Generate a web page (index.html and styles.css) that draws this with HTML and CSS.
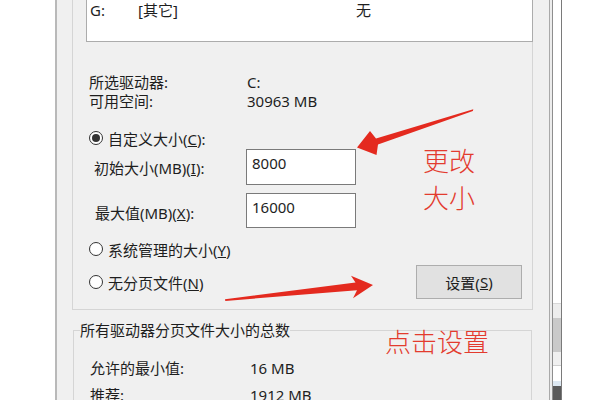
FILE: index.html
```html
<!DOCTYPE html>
<html>
<head>
<meta charset="utf-8">
<link rel="stylesheet" href="styles.css">
</head>
<body>
<div class="screen">
  <div class="blank"></div>
  <div class="dialog">
    <div class="group1">
      <div class="listbox">
        <span>G:</span><span>[其它]</span><span>无</span>
      </div>
      <div class="info">
        <div class="kv"><span class="k">所选驱动器:</span><span>C:</span></div>
        <div class="kv"><span class="k">可用空间:</span><span>30963 MB</span></div>
      </div>
      <div class="radio-row r1"><span class="radio on"></span><span>自定义大小(<u>C</u>):</span></div>
      <div class="field f-a"><span class="k">初始大小(MB)(<u>I</u>):</span><div class="input">8000</div></div>
      <div class="field f-b"><span class="k">最大值(MB)(<u>X</u>):</span><div class="input">16000</div></div>
      <div class="radio-row r2"><span class="radio"></span><span>系统管理的大小(<u>Y</u>)</span></div>
      <div class="bottom-row">
        <div class="radio-label"><span class="radio"></span><span>无分页文件(<u>N</u>)</span></div>
        <div class="button">设置(<u>S</u>)</div>
      </div>
    </div>
    <fieldset class="group2">
      <legend>所有驱动器分页文件大小的总数</legend>
      <div class="sum s-a"><span class="k">允许的最小值:</span><span>16 MB</span></div>
      <div class="sum s-b"><span class="k">推荐:</span><span>1912 MB</span></div>
    </fieldset>
  </div>
  <div class="frame">
    <div class="fr1"></div>
    <div class="fr2"></div>
    <div class="fr3">
      <div class="sb0"></div>
      <div class="sb1"></div>
      <div class="sb2"></div>
      <div class="sb3"></div>
      <div class="sb4"></div>
      <div class="sb5"></div>
      <div class="sb6"></div>
      <div class="sb7"></div>
      <div class="sb8"></div>
    </div>
    <div class="fr4"></div>
  </div>
  <div class="rest"></div>

  <svg class="arrows" width="600" height="400" viewBox="0 0 600 400">
    <polygon fill="#e42a1f" points="473.3,109.2 376,138.6 370,131 357,147.5 376.5,155 378,144.6 472.9,111.0"/>
    <polygon fill="#e42a1f" points="225,299.2 355.5,282.6 351,275.8 373,285 353,298.2 357,290.2 225.3,300.9"/>
  </svg>
  <div class="note note1">更改<br>大小</div>
  <div class="note note2">点击设置</div>
</div>
</body>
</html>
```

FILE: styles.css
```css
body {
  margin: 0;
  background: #ffffff;
  font-family: "Noto Sans", "Noto Sans CJK SC", sans-serif;
  font-size: 15px;
  color: #1e1e1e;
}

.screen {
  position: relative;
  display: flex;
  width: 600px;
  height: 400px;
  overflow: hidden;
}

.blank {
  width: 55px;
  flex: none;
}

.dialog {
  width: 495px;
  flex: none;
  box-sizing: border-box;
  border-left: 2px solid #b9b9b9;
  border-right: 1px solid #a9a9a9;
  background: #f0f0f0;
  padding-left: 15px;
}

.group1 {
  box-sizing: border-box;
  width: 461px;
  height: 310px;
  border: 1px solid #d5d5d5;
  border-top: none;
}

.listbox {
  margin-left: 13px;
  width: 447px;
  height: 42px;
  box-sizing: border-box;
  background: #ffffff;
  border: 1px solid #acacac;
  border-top: none;
  padding-left: 3px;
  display: grid;
  grid-template-columns: 48px 218px auto;
  align-content: start;
  line-height: 20px;
}

.info {
  margin-top: 31px;
  padding-left: 16px;
  line-height: 19px;
}

.kv {
  display: flex;
}

.info .k {
  width: 158px;
}

.radio-row {
  display: flex;
  align-items: center;
  height: 20px;
  padding-left: 16px;
}

.r1 {
  margin-top: 17px;
}

.r2 {
  margin-top: 11px;
}

.radio {
  width: 14px;
  height: 14px;
  box-sizing: border-box;
  border: 1px solid #333333;
  border-radius: 50%;
  margin-right: 5px;
  background: #ffffff;
  display: flex;
  align-items: center;
  justify-content: center;
  flex: none;
}

.radio.on::after {
  content: "";
  width: 8px;
  height: 8px;
  border-radius: 50%;
  background: #333333;
}

.field {
  display: flex;
  align-items: center;
}

.f-a {
  margin-top: 1px;
  height: 36px;
  padding-left: 21px;
}

.f-a .k {
  width: 152px;
}

.f-b {
  margin-top: 8px;
  height: 35px;
  padding-left: 22px;
}

.f-b .k {
  width: 151px;
  padding-top: 3px;
}

.input {
  width: 110px;
  align-self: stretch;
  box-sizing: border-box;
  border: 1px solid #7a7a7a;
  background: #ffffff;
  padding: 3px 0 0 5px;
  line-height: 20px;
}

.bottom-row {
  display: flex;
  align-items: center;
  justify-content: space-between;
  height: 34px;
  margin-top: 6px;
  padding-left: 16px;
  padding-right: 10px;
}

.radio-label {
  display: flex;
  align-items: center;
}

.button {
  width: 106px;
  height: 34px;
  box-sizing: border-box;
  background: #e1e1e1;
  border: 1px solid #adadad;
  display: flex;
  align-items: center;
  justify-content: center;
}

.group2 {
  margin: 10px 0 0 1px;
  width: 459px;
  height: 200px;
  box-sizing: border-box;
  border: 1px solid #d5d5d5;
  padding: 0 6px;
}

.group2 legend {
  padding: 0;
  line-height: 20px;
}

.sum {
  display: flex;
  padding-left: 10px;
  line-height: 20px;
}

.sum .k {
  width: 160px;
}

.s-a {
  margin-top: 18px;
}

.s-b {
  margin-top: 7px;
}

.frame {
  width: 12px;
  flex: none;
  display: flex;
}

.fr1 {
  width: 2px;
  background: #ececec;
}

.fr2 {
  width: 1px;
  background: #8e8e8e;
}

.fr3 {
  width: 8px;
  display: flex;
  flex-direction: column;
  background: #ffffff;
}

.fr4 {
  width: 1px;
  background: #7a7a7a;
}

.sb0 { height: 303px; background: #ffffff; }
.sb1 { height: 1px; background: #d8d8d8; }
.sb2 { height: 14px; background: #ededed; }
.sb3 { height: 34px; background: #c9c9c9; }
.sb4 { height: 13px; background: #f0f0f0; }
.sb5 { height: 1px; background: #cfcfcf; }
.sb6 { height: 15px; background: #ffffff; }
.sb7 { height: 5px; background: #dde8f2; }
.sb8 { flex: 1; background: #5a5a5a; }

.rest {
  flex: 1;
  background: #ffffff;
}

.arrows {
  position: absolute;
  left: 0;
  top: 0;
  pointer-events: none;
}

.note {
  position: absolute;
  color: #e33b2e;
  font-family: "Noto Sans CJK SC", sans-serif;
  font-size: 26px;
  line-height: 37px;
  font-weight: 300;
}

.note1 {
  left: 423px;
  top: 141px;
}

.note2 {
  left: 385px;
  top: 322px;
}
```
